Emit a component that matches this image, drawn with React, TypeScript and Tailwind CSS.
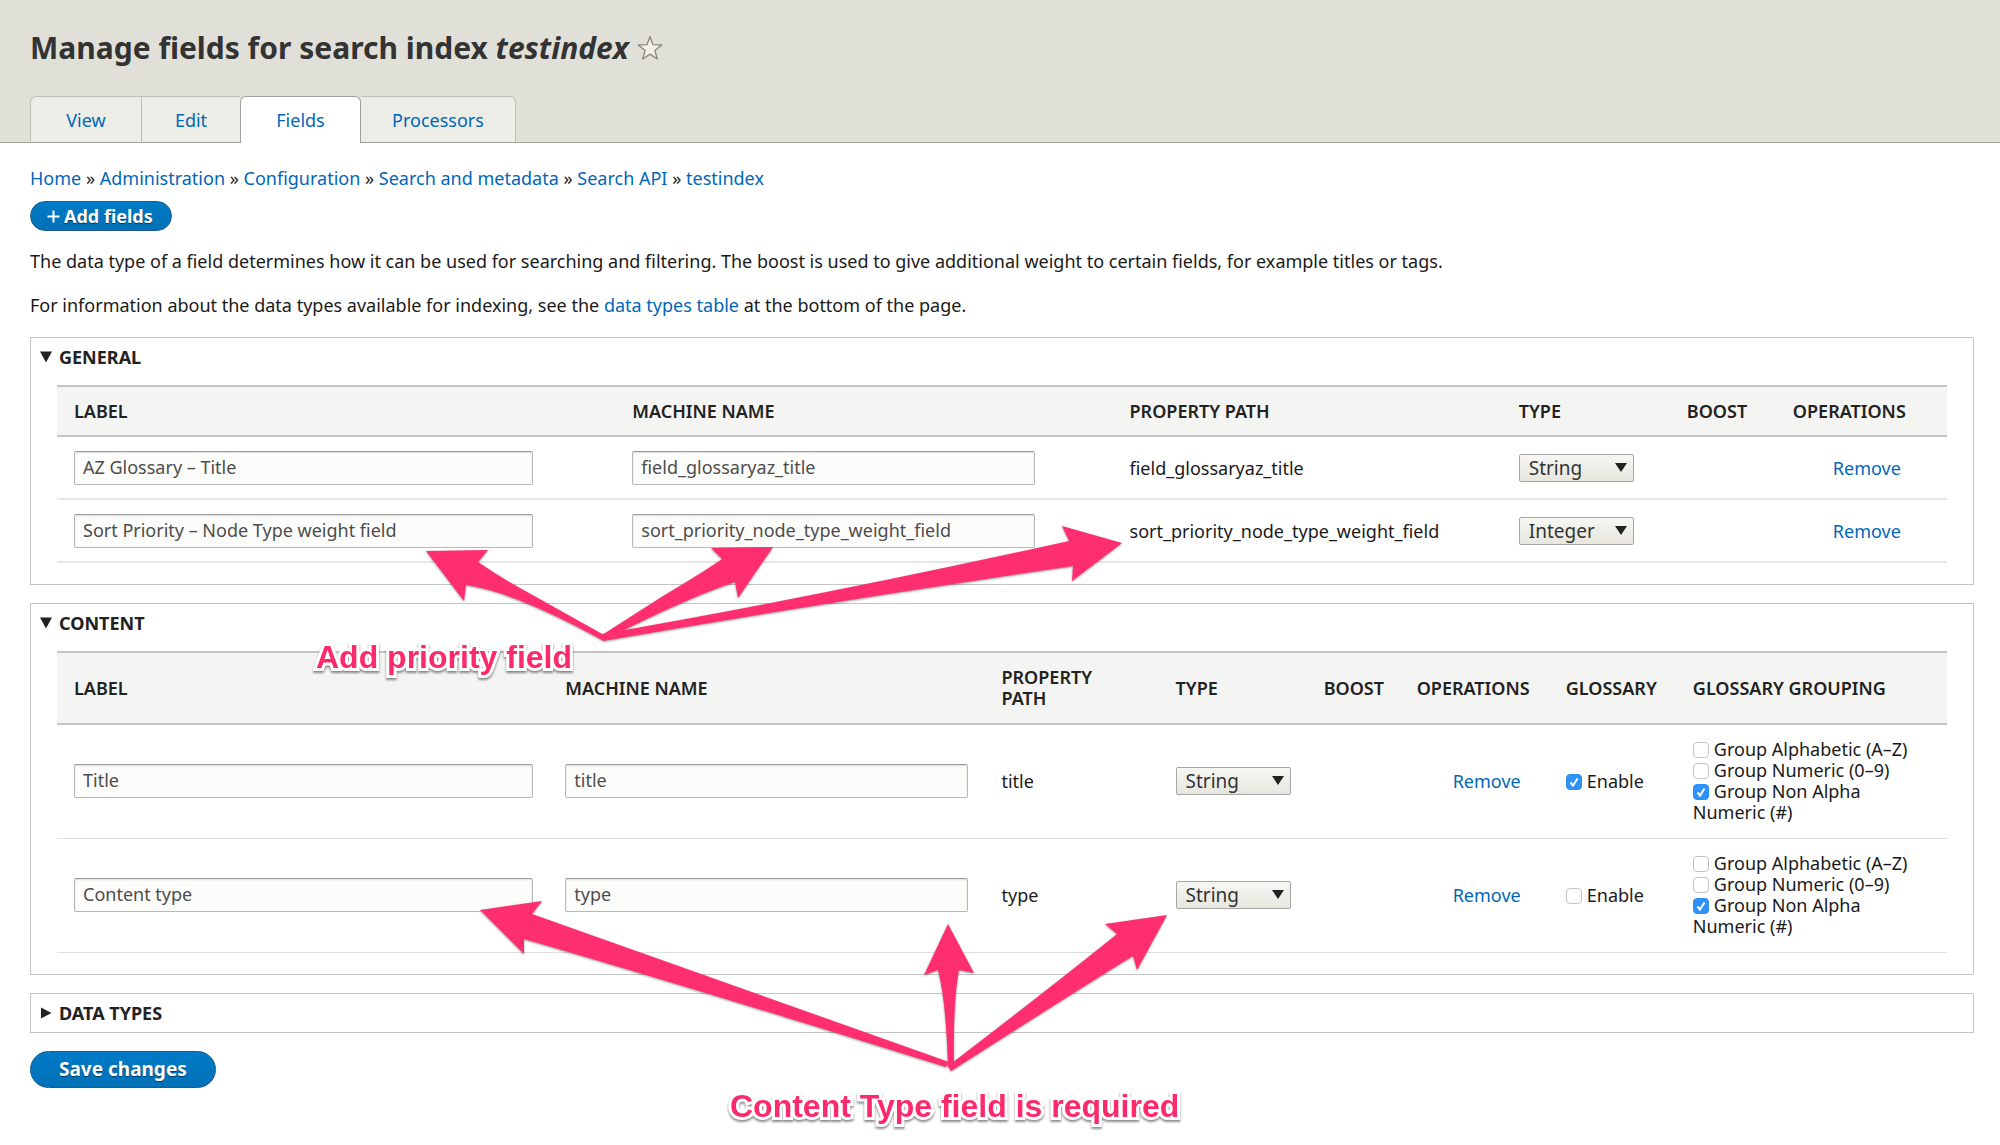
import React, { useId } from "react";

function SelectType({ value, label }: { value: string; label: string }) {
  return (
    <span className="relative inline-block align-middle">
      <select
        aria-label={label}
        defaultValue={value}
        className="block h-[28px] w-[115px] appearance-none rounded-xs border border-[#a6a6a6] bg-linear-to-b from-[#f6f6f3] to-[#e7e7df] pl-[9px] text-[19px] leading-[24px] text-[#333]"
      >
        <option>String</option>
        <option>Integer</option>
      </select>
      <svg className="pointer-events-none absolute top-[9px] right-[7px]" width="12" height="9" viewBox="0 0 12 9">
        <path d="M0 0H12L6 9z" fill="#222" />
      </svg>
    </span>
  );
}

function TextBox({ value, label, wide }: { value: string; label: string; wide?: boolean }) {
  return (
    <input
      type="text"
      aria-label={label}
      defaultValue={value}
      className={
        "block h-[34px] rounded-xs border border-[#b8b8b8] border-t-[#999] bg-[#fcfcfa] px-[8px] pb-[2px] text-[18px] text-[#4d4d4d] shadow-[inset_0_1px_2px_rgba(0,0,0,0.13)] " +
        (wide ? "w-[459px]" : "w-[403px]")
      }
    />
  );
}

function Check({ label, checked }: { label: string; checked?: boolean }) {
  const id = useId();
  return (
    <div className="leading-[21px]">
      <span className="relative mr-[5px] inline-block size-4 align-[-2px]">
        <input
          id={id}
          type="checkbox"
          defaultChecked={checked}
          className="peer block size-4 appearance-none rounded-[4px] border border-[#c4c4c4] bg-white checked:border-[#2b8ff5] checked:bg-[#2e92fa]"
        />
        <svg className="pointer-events-none absolute inset-0 hidden peer-checked:block" width="16" height="16" viewBox="0 0 16 16">
          <path d="M4.500 8.500L7 11.500L11.500 4.500" fill="none" stroke="#fff" strokeWidth="2" />
        </svg>
      </span>
      <label htmlFor={id}>{label}</label>
    </div>
  );
}

function Panel({ title, open, children }: { title: string; open?: boolean; children?: React.ReactNode }) {
  return (
    <section className="mb-[18px] border border-[#c4c4c4]">
      <h2>
        <button type="button" aria-expanded={!!open} className="flex h-[38px] w-full items-center gap-[7px] pl-[9px] text-[18px] font-bold text-[#222]">
          <svg width="12" height="12" viewBox="0 0 12 12" fill="#222">
            {open ? <path d="M0 0.500H12L6 11.500z" /> : <path d="M1 0.500V11.500L11.500 6z" />}
          </svg>
          {title}
        </button>
      </h2>
      {open && <div className="px-[26px] pt-[9px] pb-[21px]">{children}</div>}
    </section>
  );
}

function Head({ cols, widths, height }: { cols: string[]; widths: string[]; height: string }) {
  return (
    <thead>
      <tr className={"border-y-2 border-[#c4c4c2] bg-[#f4f4f2] " + height}>
        {cols.map((c, i) => (
          <th key={c} scope="col" className={"pr-5 pl-[17px] text-left leading-[21px] font-semibold text-[#222] " + widths[i]}>
            {c}
          </th>
        ))}
      </tr>
    </thead>
  );
}

const cell = "pl-[17px]";
const link = "text-[#0067b8] hover:underline";

const generalRows = [
  { label: "AZ Glossary – Title", name: "field_glossaryaz_title", type: "String" },
  { label: "Sort Priority – Node Type weight field", name: "sort_priority_node_type_weight_field", type: "Integer" },
];

const contentRows = [
  { label: "Title", name: "title", enabled: true },
  { label: "Content type", name: "type", enabled: false },
];

const crumbs = ["Home", "Administration", "Configuration", "Search and metadata", "Search API", "testindex"];

const tabs = [
  { name: "View", cls: "w-[111px] rounded-tl-md border-l" },
  { name: "Edit", cls: "w-[99px] border-l" },
  { name: "Fields", cls: "w-[121px]" },
  { name: "Processors", cls: "w-[155px] rounded-tr-md border-r" },
];

const note =
  "pointer-events-none absolute whitespace-nowrap font-['Liberation_Sans',Arial,sans-serif] text-[32px] leading-[40px] font-bold text-[#fb2a6b] [-webkit-text-stroke:6px_white] [paint-order:stroke_fill] drop-shadow-[0_2px_1px_rgba(0,0,0,0.45)]";

export default function App() {
  return (
    <div className="relative min-h-screen overflow-x-hidden bg-white font-['Noto_Sans','Open_Sans',sans-serif] text-[18px] leading-[24px] text-[#1a1a1a]">
      <header className="border-b border-[#a0a09c] bg-[#e0e0d8] px-[30px] pt-[28px]">
        <div className="flex items-center gap-[8px]">
          <h1 className="text-[30px] leading-[40px] font-bold text-[#333]">
            Manage fields for search index <em>testindex</em>
          </h1>
          <button type="button" aria-label="Add to shortcuts">
            <svg width="26" height="26" viewBox="0 0 26 26" fill="#f0efe8" stroke="#8a887a" strokeWidth="1.300" strokeLinejoin="round">
              <path d="M13 1.500L16 9.700L24.700 10L17.900 15.400L20.300 24L13 19.100L5.700 24L8.100 15.400L1.300 10L10 9.700z" />
            </svg>
          </button>
        </div>
        <nav aria-label="Tabs" className="-mb-px mt-[28px] flex">
          {tabs.map((t) =>
            t.name === "Fields" ? (
              <a key={t.name} href="#fields" aria-current="page" className={"flex h-[47px] items-center justify-center rounded-t-md border border-b-0 border-[#a0a09c] bg-white text-[#0067b8] " + t.cls}>
                {t.name}
              </a>
            ) : (
              <a key={t.name} href={"#" + t.name.toLowerCase()} className={"flex h-[47px] items-center justify-center border-t border-b border-[#bfbfba] border-b-[#a0a09c] bg-[#ededE8] text-[#0067b8] " + t.cls}>
                {t.name}
              </a>
            ),
          )}
        </nav>
      </header>

      <main className="pt-[23px] pr-[26px] pl-[30px]">
        <nav aria-label="Breadcrumb">
          {crumbs.map((c, i) => (
            <React.Fragment key={c}>
              {i > 0 && " » "}
              <a href="#" className={link}>
                {c}
              </a>
            </React.Fragment>
          ))}
        </nav>
        <button type="button" className="mt-[11px] flex h-[30px] items-center gap-[4px] rounded-full border border-[#1e5c90] bg-linear-to-b from-[#007bc6] to-[#0071b8] pr-[18px] pl-[16px] font-bold text-white [text-shadow:0_1px_1px_rgba(0,0,0,0.5)]">
          <svg width="13" height="13" viewBox="0 0 13 13" stroke="#fff" strokeWidth="2">
            <path d="M6.500 0.500V12.500M0.500 6.500H12.500" />
          </svg>
          Add fields
        </button>
        <p className="mt-[18px]">
          The data type of a field determines how it can be used for searching and filtering. The boost is used to give additional weight to certain fields, for example titles or tags.
        </p>
        <p className="mt-[20px] mb-[20px]">
          For information about the data types available for indexing, see the{" "}
          <a href="#types" className={link}>
            data types table
          </a>{" "}
          at the bottom of the page.
        </p>

        <form onSubmit={(e) => e.preventDefault()}>
          <Panel title="GENERAL" open>
            <table className="w-full table-fixed border-collapse">
              <Head
                height="h-[50px]"
                cols={["LABEL", "MACHINE NAME", "PROPERTY PATH", "TYPE", "BOOST", "OPERATIONS"]}
                widths={["w-[558px]", "w-[497px]", "w-[389px]", "w-[168px]", "w-[106px]", "w-[171px]"]}
              />
              <tbody>
                {generalRows.map((r) => (
                  <tr key={r.name} className="h-[63px] border-b-2 border-[#e6e6e4]">
                    <td className={cell}>
                      <TextBox wide value={r.label} label="Label" />
                    </td>
                    <td className={cell}>
                      <TextBox value={r.name} label="Machine name" />
                    </td>
                    <td className={cell}>{r.name}</td>
                    <td className={cell}>
                      <SelectType value={r.type} label="Type" />
                    </td>
                    <td></td>
                    <td className="pl-[57px]">
                      <a href="#remove" className={link}>
                        Remove
                      </a>
                    </td>
                  </tr>
                ))}
              </tbody>
            </table>
          </Panel>

          <Panel title="CONTENT" open>
            <table className="w-full table-fixed border-collapse">
              <Head
                height="h-[72px]"
                cols={["LABEL", "MACHINE NAME", "PROPERTY PATH", "TYPE", "BOOST", "OPERATIONS", "GLOSSARY", "GLOSSARY GROUPING"]}
                widths={["w-[491px]", "w-[436px]", "w-[174px]", "w-[148px]", "w-[93px]", "w-[149px]", "w-[127px]", "w-[271px]"]}
              />
              <tbody>
                {contentRows.map((r) => (
                  <tr key={r.name} className="h-[114px] border-b border-[#dededc]">
                    <td className={cell}>
                      <TextBox wide value={r.label} label="Label" />
                    </td>
                    <td className={cell}>
                      <TextBox value={r.name} label="Machine name" />
                    </td>
                    <td className={cell}>{r.name}</td>
                    <td className={cell}>
                      <SelectType value="String" label="Type" />
                    </td>
                    <td></td>
                    <td className="pl-[53px]">
                      <a href="#remove" className={link}>
                        Remove
                      </a>
                    </td>
                    <td className={cell}>
                      <Check label="Enable" checked={r.enabled} />
                    </td>
                    <td className="pr-[17px] pl-[17px]">
                      <Check label="Group Alphabetic (A–Z)" />
                      <Check label="Group Numeric (0–9)" />
                      <Check label="Group Non Alpha Numeric (#)" checked />
                    </td>
                  </tr>
                ))}
              </tbody>
            </table>
          </Panel>

          <Panel title="DATA TYPES" />

          <button type="submit" className="h-[37px] rounded-full border border-[#1e5c90] bg-linear-to-b from-[#007bc6] to-[#0071b8] px-[28px] text-[19px] font-bold text-white [text-shadow:0_1px_1px_rgba(0,0,0,0.5)]">
            Save changes
          </button>
        </form>
      </main>

      <svg className="pointer-events-none absolute top-0 left-0 drop-shadow-[0_1px_1px_rgba(0,0,0,0.4)]" width="1200" height="1100" viewBox="0 0 1200 1100" fill="#ff2f6f" aria-hidden="true">
        <path d="M426 551L488 550L478 562Q500 577 520 588L604 635L604 641Q515 592 466 585L464 601Z" />
        <path d="M773 547L738 598L735 582Q690 597 618 633L603 641L602 635L663 596Q705 571 722 559L711 548Z" />
        <path d="M1122 543L1072 581L1073 566Q840 600 603 641L602 634Q820 596 1069 541L1062 526Z" />
        <path d="M480 910L542 901L532 914L949 1062L946 1067Q690 987 524 939L524 954Z" />
        <path d="M948 924L974 973L959 970Q953 1000 954 1067L948 1067Q946 1000 938 970L924 975Z" />
        <path d="M1167 915L1137 970L1133 956Q1095 979 951 1071L948 1066Q1050 988 1117 934L1105 924Z" />
      </svg>
      <span className={note + " top-[637px] left-[316px]"}>Add priority field</span>
      <span className={note + " top-[1086px] left-[730px]"}>Content Type field is required</span>
    </div>
  );
}
